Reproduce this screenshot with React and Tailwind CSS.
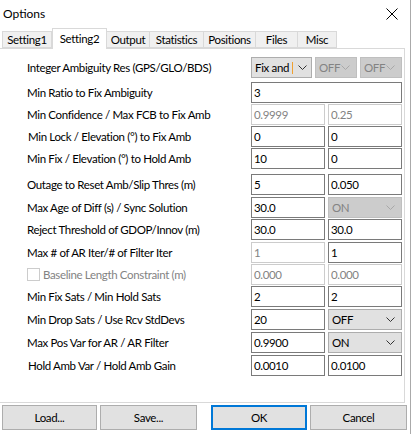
import React from 'react';

const font = { fontFamily: 'Lato, "Liberation Sans", sans-serif' };

const Chevron = ({ disabled }) => (
  <svg width="9" height="6" viewBox="0 0 9 6" className="shrink-0">
    <path d="M0.5 0.5 L4.5 4.5 L8.5 0.5" fill="none" stroke={disabled ? '#a8a8a8' : '#333'} strokeWidth="1" />
  </svg>
);

const Input = ({ value, disabled, wide }) => (
  <div
    className={`h-[21px] ${wide ? 'w-[151px]' : 'w-[74px]'} border ${
      disabled ? 'border-[#cccccc] text-[#838383]' : 'border-[#7a7a7a] text-black'
    } bg-white flex items-center px-[2px] whitespace-nowrap overflow-hidden`}
  >
    {value}
  </div>
);

const Select = ({ value, disabled, w = 'w-[74px]' }) => (
  <div
    className={`h-[21px] ${w} border flex items-center justify-between pl-[3px] pr-[6px] whitespace-nowrap ${
      disabled ? 'bg-[#cccccc] border-[#bfbfbf] text-[#838383]' : 'bg-[#e1e1e1] border-[#adadad] text-black'
    }`}
  >
    <span>{value}</span>
    <Chevron disabled={disabled} />
  </div>
);

const Row = ({ label, mt, children, indent = 'pl-[27px]' }) => (
  <div className={`flex items-center h-[21px] ${mt}`}>
    <div className={`w-[251px] ${indent} text-black whitespace-nowrap`}>{label}</div>
    <div className="flex gap-[3px]">{children}</div>
  </div>
);

const tabs = [
  { name: 'Setting1', w: 'w-[50px]' },
  { name: 'Setting2', w: 'w-[55px]', active: true },
  { name: 'Output', w: 'w-[44px]' },
  { name: 'Statistics', w: 'w-[55px]' },
  { name: 'Positions', w: 'w-[53px]' },
  { name: 'Files', w: 'w-[43px]' },
  { name: 'Misc', w: 'w-[40px]' },
];

export default function App() {
  return (
    <div
      className="w-[411px] h-[434px] bg-white relative overflow-hidden border-r border-[#aaaaaa] text-[11.5px] tracking-[-0.35px]"
      style={font}
    >
      {/* title bar */}
      <div className="h-[28px] flex items-center justify-between pl-[3px] pr-[12px]">
        <span className="text-[12px] tracking-normal text-black">Options</span>
        <svg width="12" height="12" viewBox="0 0 12 12">
          <path d="M0.5 0.5 L11.5 11.5 M11.5 0.5 L0.5 11.5" stroke="#000" strokeWidth="1" />
        </svg>
      </div>

      {/* tabs */}
      <div className="flex items-end h-[20px] pl-[2px] relative z-10">
        {tabs.map((t) =>
          t.active ? (
            <div
              key={t.name}
              className={`${t.w} h-[21px] -mb-px bg-white border border-b-0 border-[#d9d9d9] flex items-start justify-center pt-[1px] whitespace-nowrap`}
            >
              {t.name}
            </div>
          ) : (
            <div
              key={t.name}
              className={`${t.w} h-[17px] bg-[#f0f0f0] border border-[#d9d9d9] -ml-px first:ml-0 flex items-center justify-center whitespace-nowrap`}
            >
              {t.name}
            </div>
          )
        )}
      </div>

      {/* panel */}
      <div className="w-[405px] h-[355px] border-t border-r border-b border-[#d9d9d9] pt-[8px]">
        <Row label="Integer Ambiguity Res (GPS/GLO/BDS)" mt="mt-0">
          <div className="flex gap-[3px]">
            <div className="h-[21px] w-[61px] border border-[#adadad] bg-[#e1e1e1] flex items-center justify-between pl-[3px] pr-[4px] whitespace-nowrap">
              <span className="flex items-center">
                Fix and<span className="inline-block w-px h-[12px] bg-[#f0a030] ml-[3px]" />
              </span>
              <Chevron />
            </div>
            <Select value="OFF" disabled w="w-[42px]" />
            <Select value="OFF" disabled w="w-[42px]" />
          </div>
        </Row>
        <Row label="Min Ratio to Fix Ambiguity" mt="mt-[4px]">
          <Input value="3" wide />
        </Row>
        <Row label="Min Confidence / Max FCB to Fix Amb" mt="mt-px">
          <Input value="0.9999" disabled />
          <Input value="0.25" disabled />
        </Row>
        <Row label="Min Lock / Elevation (°) to Fix Amb" mt="mt-px" indent="pl-[28px]">
          <Input value="0" />
          <Input value="0" />
        </Row>
        <Row label="Min Fix / Elevation (°) to Hold Amb" mt="mt-px">
          <Input value="10" />
          <Input value="0" />
        </Row>
        <Row label="Outage to Reset Amb/Slip Thres (m)" mt="mt-[5px]">
          <Input value="5" />
          <Input value="0.050" />
        </Row>
        <Row label="Max Age of Diff (s) / Sync Solution" mt="mt-[2px]">
          <Input value="30.0" />
          <Select value="ON" disabled />
        </Row>
        <Row label="Reject Threshold of GDOP/Innov (m)" mt="mt-px">
          <Input value="30.0" />
          <Input value="30.0" />
        </Row>
        <Row label="Max # of AR Iter/# of Filter Iter" mt="mt-[2px]">
          <Input value="1" disabled />
          <Input value="1" />
        </Row>
        <div className="flex items-center h-[21px] mt-px">
          <div className="w-[251px] pl-[27px] flex items-center gap-[3px] text-[#838383] whitespace-nowrap">
            <span className="w-[13px] h-[13px] border border-[#cccccc] bg-white" />
            Baseline Length Constraint (m)
          </div>
          <div className="flex gap-[3px]">
            <Input value="0.000" disabled />
            <Input value="0.000" disabled />
          </div>
        </div>
        <Row label="Min Fix Sats / Min Hold Sats" mt="mt-px">
          <Input value="2" />
          <Input value="2" />
        </Row>
        <Row label="Min Drop Sats / Use Rcv StdDevs" mt="mt-[2px]">
          <Input value="20" />
          <Select value="OFF" />
        </Row>
        <Row label="Max Pos Var for AR / AR Filter" mt="mt-[2px]">
          <Input value="0.9900" />
          <Select value="ON" />
        </Row>
        <Row label="Hold Amb Var / Hold Amb Gain" mt="mt-[2px]" indent="pl-[28px]">
          <Input value="0.0010" />
          <Input value="0.0100" />
        </Row>
      </div>

      {/* buttons */}
      <div className="flex pl-[2px] mt-[2px]">
        <button className="w-[95px] h-[25px] bg-[#e1e1e1] border border-[#adadad]">Load...</button>
        <button className="w-[97px] h-[25px] bg-[#e1e1e1] border border-[#adadad] ml-[3px]">Save...</button>
        <button className="w-[96px] h-[25px] bg-[#e1e1e1] border-2 border-[#0078d7] ml-[14px]">OK</button>
        <button className="w-[97px] h-[25px] bg-[#e1e1e1] border border-[#adadad] ml-[3px]">Cancel</button>
      </div>
    </div>
  );
}
